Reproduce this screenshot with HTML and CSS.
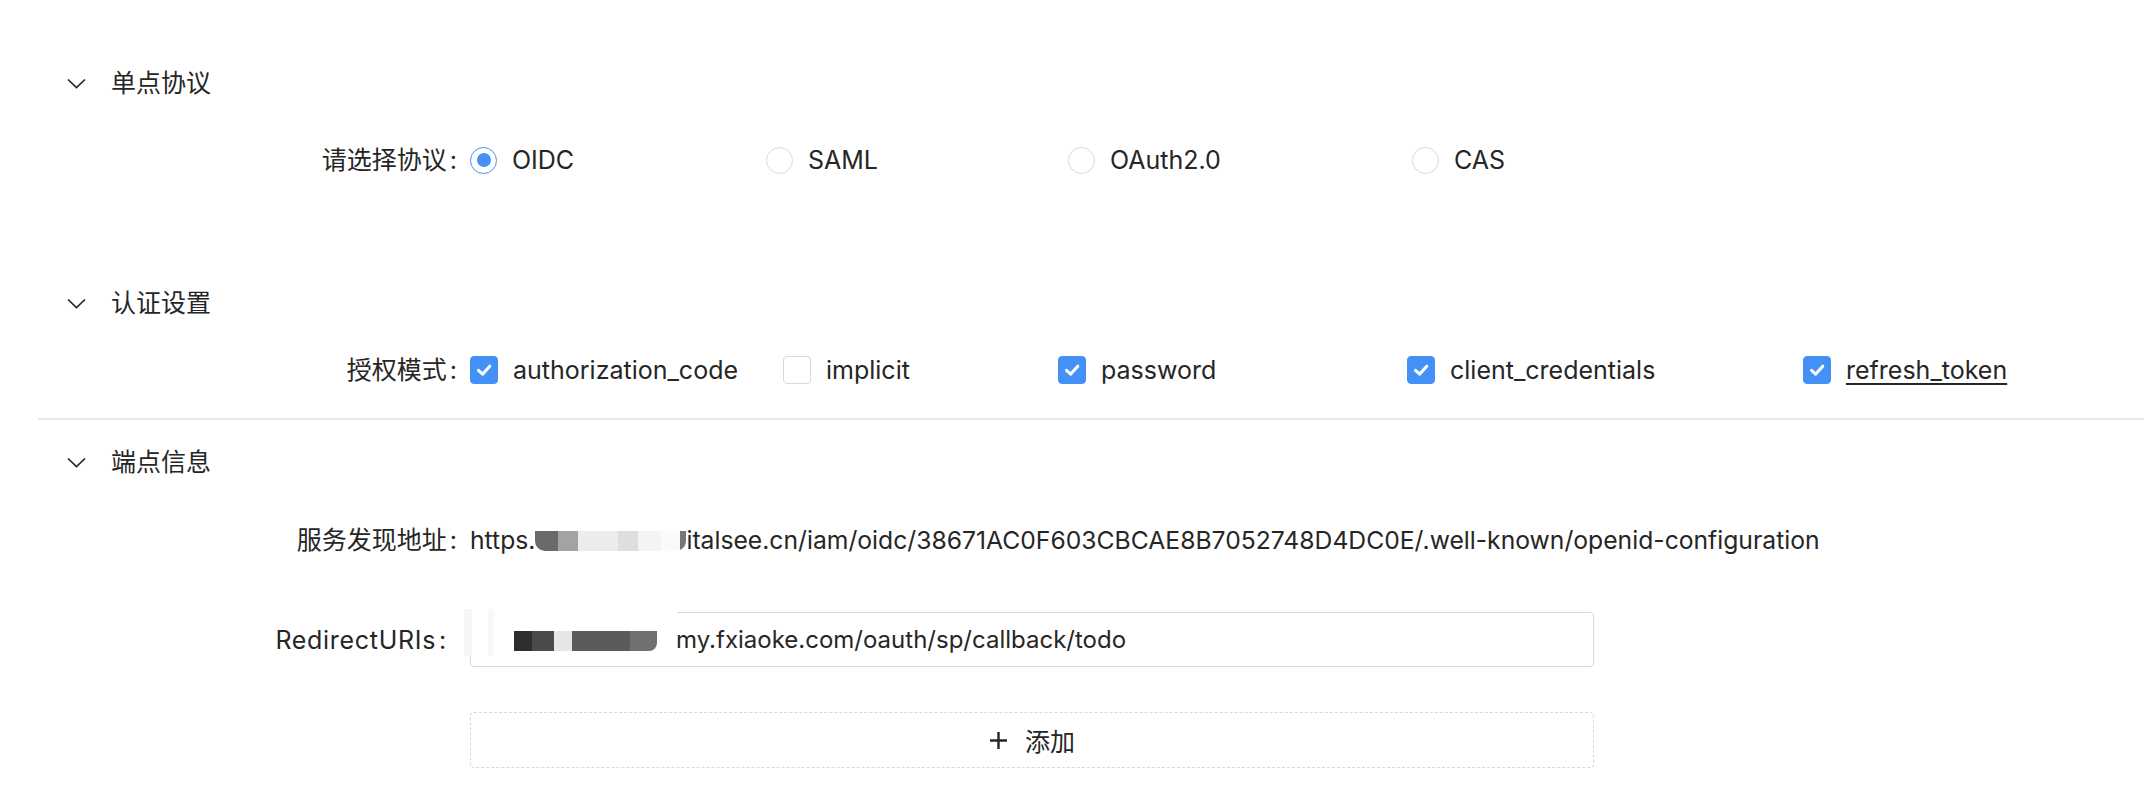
FILE: index.html
```html
<!DOCTYPE html>
<html lang="zh-CN">
<head>
<meta charset="utf-8">
<title>单点登录配置</title>
<link rel="stylesheet" href="styles.css">
</head>
<body>
<div class="page">

  <section class="panel panel-protocol">
    <div class="panel-header">
      <svg class="chevron" width="19" height="11" viewBox="0 0 19 11"><path d="M1 1.5 L9.5 9.5 L18 1.5" fill="none" stroke="#262626" stroke-width="1.7"/></svg>
      <span class="panel-title">单点协议</span>
    </div>
    <div class="form-row row-protocol">
      <label class="field-label">请选择协议<span class="colon">:</span></label>
      <div class="option-grid radio-grid">
        <span class="option"><span class="radio checked"></span><span class="option-text">OIDC</span></span>
        <span class="option"><span class="radio"></span><span class="option-text">SAML</span></span>
        <span class="option"><span class="radio"></span><span class="option-text">OAuth2.0</span></span>
        <span class="option"><span class="radio"></span><span class="option-text">CAS</span></span>
      </div>
    </div>
  </section>

  <section class="panel panel-auth">
    <div class="panel-header">
      <svg class="chevron" width="19" height="11" viewBox="0 0 19 11"><path d="M1 1.5 L9.5 9.5 L18 1.5" fill="none" stroke="#262626" stroke-width="1.7"/></svg>
      <span class="panel-title">认证设置</span>
    </div>
    <div class="form-row row-grant">
      <label class="field-label">授权模式<span class="colon">:</span></label>
      <div class="option-grid check-grid">
        <span class="option"><span class="checkbox checked"><svg viewBox="0 0 16 16"><path d="M4 8.2 L7 11 L12.2 5.2" fill="none" stroke="#fff" stroke-width="2.2" stroke-linecap="round" stroke-linejoin="round"/></svg></span><span class="option-text">authorization_code</span></span>
        <span class="option"><span class="checkbox"></span><span class="option-text">implicit</span></span>
        <span class="option"><span class="checkbox checked"><svg viewBox="0 0 16 16"><path d="M4 8.2 L7 11 L12.2 5.2" fill="none" stroke="#fff" stroke-width="2.2" stroke-linecap="round" stroke-linejoin="round"/></svg></span><span class="option-text">password</span></span>
        <span class="option"><span class="checkbox checked"><svg viewBox="0 0 16 16"><path d="M4 8.2 L7 11 L12.2 5.2" fill="none" stroke="#fff" stroke-width="2.2" stroke-linecap="round" stroke-linejoin="round"/></svg></span><span class="option-text">client_credentials</span></span>
        <span class="option"><span class="checkbox checked"><svg viewBox="0 0 16 16"><path d="M4 8.2 L7 11 L12.2 5.2" fill="none" stroke="#fff" stroke-width="2.2" stroke-linecap="round" stroke-linejoin="round"/></svg></span><span class="option-text hovered">refresh_token</span></span>
      </div>
    </div>
  </section>

  <hr class="divider">

  <section class="panel panel-endpoint">
    <div class="panel-header">
      <svg class="chevron" width="19" height="11" viewBox="0 0 19 11"><path d="M1 1.5 L9.5 9.5 L18 1.5" fill="none" stroke="#262626" stroke-width="1.7"/></svg>
      <span class="panel-title">端点信息</span>
    </div>
    <div class="form-row row-discovery">
      <label class="field-label">服务发现地址<span class="colon">:</span></label>
      <div class="field-value">https.<span class="mosaic mosaic-url"><i class="m1"></i><i class="m2"></i><i class="m3"></i><i class="m4"></i><i class="m5"></i><i class="m6"></i><i class="m7"></i></span>italsee.cn/iam/oidc/38671AC0F603CBCAE8B7052748D4DC0E/.well-known/openid-configuration</div>
    </div>
    <div class="form-row row-redirect">
      <label class="field-label label-list">RedirectURIs<span class="colon">:</span></label>
      <div class="field-control">
        <div class="text-input"><span class="mosaic mosaic-input"><i class="n1"></i><i class="n2"></i><i class="n3"></i><i class="n4"></i><i class="n5"></i></span>my.fxiaoke.com/oauth/sp/callback/todo</div>
      </div>
    </div>
    <div class="form-row row-add">
      <span class="field-label"></span>
      <div class="field-control">
        <button class="add-button" type="button"><svg width="19" height="19" viewBox="0 0 19 19"><path d="M9.5 1 V18 M1 9.5 H18" stroke="#262626" stroke-width="2.4"/></svg><span>添加</span></button>
      </div>
    </div>
  </section>

</div>
</body>
</html>
```
FILE: styles.css
```css
html, body {
  margin: 0;
  padding: 0;
  background: #fff;
}

body {
  font-family: "Inter", "Noto Sans CJK SC", sans-serif;
  font-size: 25px;
  color: #262626;
}

.page {
  padding-top: 64px;
}

/* collapse panel header */
.panel-header {
  display: flex;
  align-items: center;
  height: 38px;
  padding-left: 67px;
}

.chevron {
  flex: none;
  margin-right: 25px;
}

.panel-title {
  line-height: 38px;
}

/* form rows */
.form-row {
  display: flex;
  align-items: center;
  min-height: 38px;
}

.field-label {
  flex: none;
  width: 470px;
  box-sizing: border-box;
  padding-right: 13px;
  text-align: right;
  line-height: 38px;
}

.label-list {
  padding-right: 23px;
  letter-spacing: 0.7px;
}

.colon {
  margin-left: 3px;
}

.row-protocol { margin-top: 39px; }
.panel-auth { margin-top: 105px; }
.row-grant { margin-top: 29px; }

.divider {
  margin: 29px 0 0 38px;
  border: 0;
  height: 2px;
  background: #e8e8e8;
}

.panel-endpoint { margin-top: 23px; }
.row-discovery { margin-top: 40px; }
.row-redirect { margin-top: 53px; }
.row-add { margin-top: 45px; }

/* radios and checkboxes */
.option-grid {
  display: grid;
  align-items: center;
}

.radio-grid {
  grid-template-columns: 296px 302px 344px auto;
}

.check-grid {
  grid-template-columns: 313px 275px 349px 396px auto;
}

.option {
  display: flex;
  align-items: center;
  gap: 15px;
  line-height: 38px;
}

.radio {
  flex: none;
  width: 27px;
  height: 27px;
  box-sizing: border-box;
  border: 1.5px solid #d9d9d9;
  border-radius: 50%;
  display: flex;
  align-items: center;
  justify-content: center;
}

.radio.checked {
  border-color: #4390f7;
}

.radio.checked::after {
  content: "";
  width: 14px;
  height: 14px;
  border-radius: 50%;
  background: #4390f7;
}

.checkbox {
  flex: none;
  width: 28px;
  height: 28px;
  box-sizing: border-box;
  border: 1.5px solid #d9d9d9;
  border-radius: 4px;
  display: flex;
  align-items: center;
  justify-content: center;
}

.checkbox.checked {
  background: #4390f7;
  border-color: #4390f7;
}

.checkbox svg {
  width: 22px;
  height: 22px;
}

.option-text.hovered {
  text-decoration: underline;
  text-underline-offset: 4px;
  text-decoration-thickness: 2px;
}

/* read-only value */
.field-value {
  font-size: 24.7px;
  line-height: 38px;
  white-space: nowrap;
}

/* pixelated redaction */
.mosaic {
  display: inline-flex;
  vertical-align: middle;
}

.mosaic i {
  display: block;
  height: 100%;
}

.mosaic-url {
  width: 151px;
  height: 20px;
  margin-top: -2px;
  border-radius: 0 0 10px 10px;
  overflow: hidden;
}

.m1 { width: 23px; background: #6a6a6a; }
.m2 { width: 20px; background: #a3a3a3; }
.m3 { width: 40px; background: #ececec; }
.m4 { width: 20px; background: #dedede; }
.m5 { width: 23px; background: #f4f4f4; }
.m6 { width: 19px; background: #fafafa; }
.m7 { width: 6px; background: #777; }

/* text input */
.field-control {
  flex: none;
  width: 1124px;
}

.text-input {
  position: relative;
  height: 55px;
  box-sizing: border-box;
  border: 1.5px solid #d9d9d9;
  border-radius: 4px;
  padding-left: 43px;
  display: flex;
  align-items: center;
  white-space: nowrap;
  font-size: 24px;
}

.mosaic-input {
  position: relative;
  width: 143px;
  height: 20px;
  margin-right: 19px;
  margin-top: 2px;
}

/* light wash over the input edge around the redaction */
.mosaic-input::before {
  content: "";
  position: absolute;
  left: -50px;
  top: -22px;
  width: 213px;
  height: 47px;
  background: linear-gradient(90deg, #f6f6f6 0 8px, #fff 8px 24px, #f8f8f8 24px 30px, #fff 30px);
  border-radius: 0 0 10px 0;
  z-index: 0;
}

.mosaic-input i {
  position: relative;
  z-index: 1;
}

.n1 { width: 18px; background: #2e2e2e; }
.n2 { width: 22px; background: #4a4a4a; }
.n3 { width: 18px; background: #e6e6e6; }
.n4 { width: 58px; background: #5a5a5a; }
.n5 { width: 27px; background: #707070; border-radius: 0 0 8px 0; }

/* dashed add button */
.add-button {
  width: 100%;
  height: 56px;
  box-sizing: border-box;
  border: 1.5px dashed #d9d9d9;
  border-radius: 4px;
  background: #fff;
  font: inherit;
  color: #262626;
  display: flex;
  align-items: center;
  justify-content: center;
  gap: 17px;
  padding: 0;
}
```
